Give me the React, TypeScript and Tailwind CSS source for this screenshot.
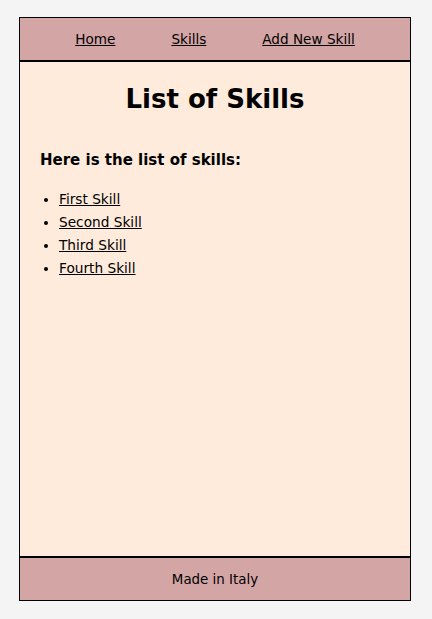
const skills = ['First Skill', 'Second Skill', 'Third Skill', 'Fourth Skill'];

export default function App() {
  return (
    <div className="min-h-[619px] bg-[#f4f4f4] pt-[17px] font-['DejaVu_Sans',sans-serif] text-black">
      <div className="mx-[19px] w-[392px] h-[584px] border border-black flex flex-col">
        {/* nav */}
        <nav className="h-[44px] shrink-0 bg-[#d4a5a5] border-b-2 border-black flex items-center justify-center gap-[56px] text-[13.6px]">
          <a href="#" className="underline">Home</a>
          <a href="#" className="underline">Skills</a>
          <a href="#" className="underline">Add New Skill</a>
        </nav>

        <main className="flex-1 bg-[#ffebdc] px-[20px] pt-[21px]">
          <h1 className="text-center font-bold text-[26px] leading-[32px]">List of Skills</h1>
          <h3 className="mt-[35px] font-bold text-[15px] leading-[20px]">Here is the list of skills:</h3>
          <ul className="mt-[18px] list-disc pl-[19px] text-[13.7px] leading-[23px]">
            {skills.map((s) => (
              <li key={s}>
                <a href="#" className="underline">{s}</a>
              </li>
            ))}
          </ul>
        </main>

        <footer className="h-[44px] shrink-0 bg-[#d4a5a5] border-t-2 border-black flex items-center justify-center pt-[2px] text-[13.4px]">
          Made in Italy
        </footer>
      </div>
    </div>
  );
}
